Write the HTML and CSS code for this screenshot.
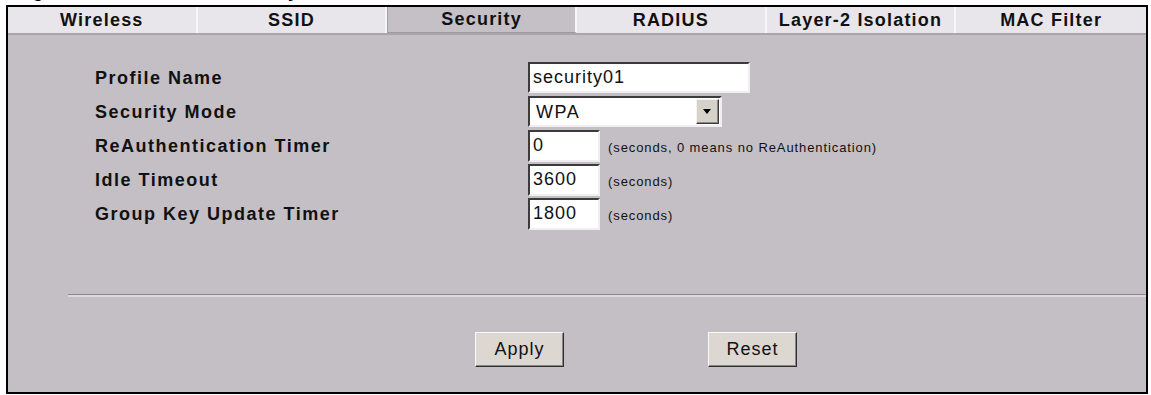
FILE: index.html
```html
<!DOCTYPE html>
<html lang="en">
<head>
    <meta charset="UTF-8">
    <title>Wireless Security</title>
    <link rel="stylesheet" href="styles.css">
</head>
<body>
    <div class="caption"><span>Figure 58 Wireless &gt; Security</span></div>
    <div class="panel">
        <div class="tabs">
            <div class="tab">Wireless</div>
            <div class="tab">SSID</div>
            <div class="tab active">Security</div>
            <div class="tab">RADIUS</div>
            <div class="tab">Layer-2 Isolation</div>
            <div class="tab">MAC Filter</div>
        </div>
        <form method="post" class="content">
            <div class="fields">
                <div class="label">Profile Name</div>
                <div class="field"><input type="text" class="text wide" value="security01" name="profile"></div>

                <div class="label">Security Mode</div>
                <div class="field">
                    <div class="select-wrap">
                        <select name="mode">
                            <option>WPA</option>
                            <option>WEP</option>
                            <option>None</option>
                        </select>
                        <span class="arrow"></span>
                    </div>
                </div>

                <div class="label">ReAuthentication Timer</div>
                <div class="field"><input type="text" class="text short" value="0" name="reauth"><span class="hint">(seconds, 0 means no ReAuthentication)</span></div>

                <div class="label">Idle Timeout</div>
                <div class="field"><input type="text" class="text short" value="3600" name="idle"><span class="hint">(seconds)</span></div>

                <div class="label">Group Key Update Timer</div>
                <div class="field"><input type="text" class="text short" value="1800" name="groupkey"><span class="hint">(seconds)</span></div>
            </div>
            <div class="divider"></div>
            <div class="actions">
                <button type="submit">Apply</button>
                <button type="reset">Reset</button>
            </div>
        </form>
    </div>
</body>
</html>
```
FILE: styles.css
```css
body {
    margin: 0;
    background: #fff;
    font-family: "Liberation Sans", Arial, sans-serif;
    color: #000;
}

/* figure caption, cut off by the top edge of the shot */
.caption {
    height: 5px;
    overflow: hidden;
    padding-left: 14px;
}

.caption span {
    display: block;
    margin-top: -18px;
    font-size: 18px;
    line-height: 18px;
    font-weight: bold;
    letter-spacing: 1.2px;
}

.panel {
    margin-left: 6px;
    width: 1142px;
    height: 389px;
    box-sizing: border-box;
    border: 2px solid #000;
    display: flex;
    flex-direction: column;
}

/* tab strip */
.tabs {
    display: grid;
    grid-template-columns: repeat(6, 1fr);
    height: 26px;
    border-bottom: 2px solid #a9a5aa;
    background: #e9e6eb;
}

.tab {
    display: flex;
    align-items: center;
    justify-content: center;
    font-size: 18px;
    font-weight: bold;
    letter-spacing: 1.2px;
    color: #111;
    border-right: 2px solid #f7f5f8;
}

.tab:last-child {
    border-right: none;
}

.tab.active {
    background: #c4c0c5;
    border-left: 1px solid #a4a0a5;
    border-bottom: 1px solid #9e9a9f;
}

.content {
    flex-grow: 1;
    background: #c3bfc5;
    margin: 0;
}

.fields {
    display: grid;
    grid-template-columns: 433px auto;
    grid-auto-rows: 31px;
    row-gap: 3px;
    padding: 27px 0 0 87px;
}

.label {
    display: flex;
    align-items: center;
    font-size: 18px;
    font-weight: bold;
    letter-spacing: 1.5px;
    color: #111;
    padding-top: 2px;
}

.field {
    display: flex;
    align-items: center;
}

input.text {
    height: 31px;
    box-sizing: border-box;
    margin: 0;
    padding: 0 0 0 3px;
    font-family: "Liberation Sans", Arial, sans-serif;
    font-size: 18px;
    letter-spacing: 1px;
    color: #111;
    background: #fff;
    border-style: solid;
    border-width: 2px;
    border-color: #3c3a3c #f0eef0 #f0eef0 #3c3a3c;
    outline: none;
}

input.wide {
    width: 222px;
}

input.short {
    width: 72px;
    height: 32px;
}

.hint {
    margin-left: 8px;
    font-size: 13px;
    letter-spacing: 0.9px;
    color: #111;
    padding-top: 3px;
}

.select-wrap {
    position: relative;
    width: 194px;
    height: 31px;
}

.select-wrap select {
    appearance: none;
    -webkit-appearance: none;
    width: 100%;
    height: 100%;
    margin: 0;
    padding: 0 0 0 6px;
    font-family: "Liberation Sans", Arial, sans-serif;
    font-size: 18px;
    letter-spacing: 1.5px;
    background: #fff;
    border-style: solid;
    border-width: 2px;
    border-color: #3c3a3c #f0eef0 #f0eef0 #3c3a3c;
    border-radius: 0;
    outline: none;
    color: #111;
}

/* drop-down button drawn over the select */
.select-wrap .arrow {
    position: absolute;
    top: 3px;
    right: 3px;
    width: 23px;
    height: 25px;
    box-sizing: border-box;
    background: #d6d2ca;
    border: 1px solid;
    border-color: #f4f2ee #3a3a3a #3a3a3a #f4f2ee;
    box-shadow: inset -1px -1px #8a8884;
}

.select-wrap .arrow::after {
    content: "";
    position: absolute;
    left: 6px;
    top: 9px;
    border-left: 4px solid transparent;
    border-right: 4px solid transparent;
    border-top: 5px solid #000;
}

.divider {
    margin: 65px 0 0 60px;
    border-top: 1px solid #8c888d;
    border-bottom: 2px solid #dcd8dd;
}

.actions {
    display: flex;
    gap: 144px;
    padding: 35px 0 0 467px;
}

.actions button {
    width: 89px;
    height: 35px;
    margin: 0;
    padding: 0;
    font-family: "Liberation Sans", Arial, sans-serif;
    font-size: 18px;
    letter-spacing: 1px;
    color: #111;
    background: #dcd8d1;
    border: 1px solid;
    border-color: #fbfaf8 #2e2e2e #2e2e2e #fbfaf8;
    box-shadow: inset -1px -1px #8a8884;
    cursor: pointer;
}
```
